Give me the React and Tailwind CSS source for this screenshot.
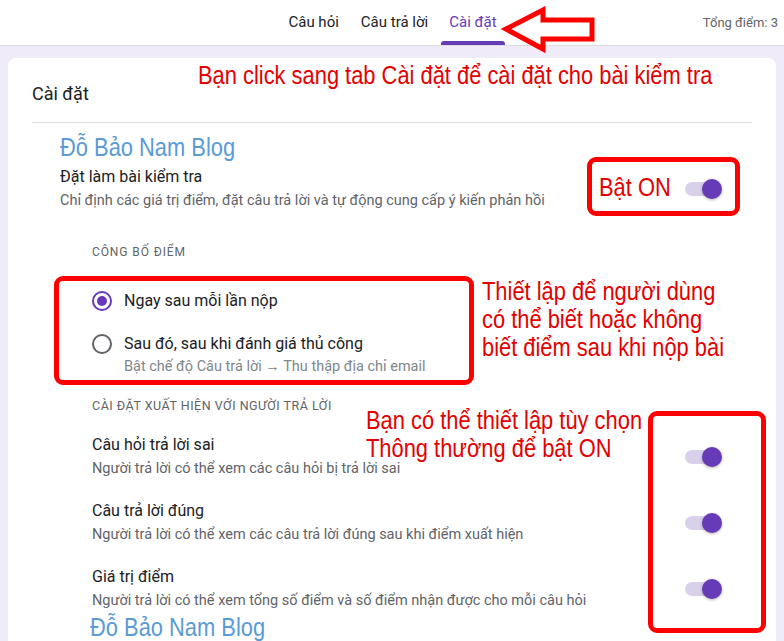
import React from "react";

const RED_TEXT = "text-[#e40000]";
const arial = { fontFamily: '"Liberation Sans", Arial, sans-serif' };

function Narrow({ className = "", children }) {
  return (
    <div
      className={"origin-top-left scale-x-[0.875] whitespace-nowrap " + className}
      style={arial}
    >
      {children}
    </div>
  );
}

function Toggle() {
  return (
    <div className="relative w-[37px] h-[20px] shrink-0">
      <div className="absolute left-0 top-[3px] w-[34px] h-[14px] rounded-full bg-[#d9d0ec]" />
      <div className="absolute right-0 top-0 w-[20px] h-[20px] rounded-full bg-[#673ab7] shadow-[0_1px_3px_rgba(0,0,0,0.3)]" />
    </div>
  );
}

function Radio({ checked }) {
  return (
    <div
      className={
        "w-[20px] h-[20px] rounded-full border-2 flex items-center justify-center shrink-0 " +
        (checked ? "border-[#673ab7]" : "border-[#5f6368]")
      }
    >
      {checked && <div className="w-[10px] h-[10px] rounded-full bg-[#673ab7]" />}
    </div>
  );
}

function SettingRow({ title, sub, className = "" }) {
  return (
    <div className={"flex items-center justify-between " + className}>
      <div>
        <div className="text-[16px] leading-[20px] text-[#202124]">{title}</div>
        <div className="text-[14.5px] leading-[20px] mt-[4px] text-[#5f6368]">{sub}</div>
      </div>
      <Toggle />
    </div>
  );
}

export default function App() {
  return (
    <div
      className="relative w-[784px] h-[641px] overflow-hidden bg-[#f0ebf8]"
      style={{ fontFamily: 'Roboto, "Liberation Sans", sans-serif' }}
    >
      {/* Header */}
      <div className="h-[46px] bg-white border-b border-[#dadce0] grid grid-cols-[1fr_auto_1fr]">
        <div />
        <div className="flex items-stretch gap-[4px]">
          <div className="px-[9px] flex items-center text-[15px] text-[#202124]">Câu hỏi</div>
          <div className="px-[9px] flex items-center text-[15px] text-[#202124]">Câu trả lời</div>
          <div className="relative px-[8px] flex items-center text-[15px] text-[#673ab7]">
            Cài đặt
            <div className="absolute left-0 right-0 bottom-0 h-[4px] rounded-t-[3px] bg-[#673ab7]" />
          </div>
        </div>
        <div className="flex items-center justify-end pr-[6px] text-[13px] text-[#5f6368]">Tổng điểm: 3</div>
      </div>

      {/* Card */}
      <div className="mx-2 mt-[12px] rounded-lg bg-white px-6 pt-[24px] pb-6">
        <div className="text-[18px] leading-[24px] text-[#202124]">Cài đặt</div>
        <div className="mt-[16px] h-px bg-[#dadce0]" />
        <div className="pl-[28px] pr-[30px]">
          <Narrow className="mt-[10px] text-[25px] leading-[28px] text-[#5b9bd5]">Đỗ Bảo Nam Blog</Narrow>
          <SettingRow
            className="mt-[6px]"
            title="Đặt làm bài kiểm tra"
            sub="Chỉ định các giá trị điểm, đặt câu trả lời và tự động cung cấp ý kiến phản hồi"
          />
          <div className="pl-[32px]">
            <div className="mt-[33px] text-[12px] leading-[16px] tracking-[0.9px] text-[#5f6368]">CÔNG BỐ ĐIỂM</div>
            <div className="mt-[31px] flex items-center gap-[12px]">
              <Radio checked />
              <div className="text-[16px] leading-[20px] text-[#202124]">Ngay sau mỗi lần nộp</div>
            </div>
            <div className="mt-[23px] flex items-start gap-[12px]">
              <Radio />
              <div>
                <div className="text-[16px] leading-[20px] text-[#202124]">Sau đó, sau khi đánh giá thủ công</div>
                <div className="text-[14.5px] leading-[20px] mt-[3px] text-[#80868b]">
                  Bật chế độ Câu trả lời → Thu thập địa chỉ email
                </div>
              </div>
            </div>
            <div className="mt-[21px] text-[12.5px] leading-[16px] tracking-[0.5px] text-[#5f6368]">
              CÀI ĐẶT XUẤT HIỆN VỚI NGƯỜI TRẢ LỜI
            </div>
            <SettingRow
              className="mt-[21px]"
              title="Câu hỏi trả lời sai"
              sub="Người trả lời có thể xem các câu hỏi bị trả lời sai"
            />
            <SettingRow
              className="mt-[22px]"
              title="Câu trả lời đúng"
              sub="Người trả lời có thể xem các câu trả lời đúng sau khi điểm xuất hiện"
            />
            <SettingRow
              className="mt-[22px]"
              title="Giá trị điểm"
              sub="Người trả lời có thể xem tổng số điểm và số điểm nhận được cho mỗi câu hỏi"
            />
            <Narrow className="mt-[2px] -ml-[2px] text-[25px] leading-[28px] text-[#5b9bd5]">Đỗ Bảo Nam Blog</Narrow>
          </div>
        </div>
      </div>

      {/* Annotations (overlay) */}
      <svg className="absolute left-[500px] top-[6px]" width="100" height="50" viewBox="0 0 100 50">
        <polygon
          points="6,23 43,4 43,14 92,14 92,33 43,33 43,43"
          fill="white"
          stroke="#ff0000"
          strokeWidth="5"
          strokeLinejoin="miter"
        />
      </svg>

      <Narrow className={"absolute left-[198px] top-[60px] text-[25px] leading-[30px] " + RED_TEXT}>
        Bạn click sang tab Cài đặt để cài đặt cho bài kiểm tra
      </Narrow>

      <div className="absolute left-[587px] top-[157px] w-[153px] h-[59px] border-[5px] border-[#ff0000] rounded-[9px]" />
      <Narrow className={"absolute left-[599px] top-[172px] text-[25px] leading-[30px] " + RED_TEXT}>Bật ON</Narrow>

      <div className="absolute left-[54px] top-[276px] w-[420px] h-[109px] border-[5px] border-[#ff0000] rounded-[9px]" />
      <Narrow className={"absolute left-[482px] top-[277px] text-[25px] leading-[28px] " + RED_TEXT}>
        <div>Thiết lập để người dùng</div>
        <div>có thể biết hoặc không</div>
        <div>biết điểm sau khi nộp bài</div>
      </Narrow>

      <Narrow className={"absolute left-[366px] top-[406px] text-[25px] leading-[28px] " + RED_TEXT}>
        <div>Bạn có thể thiết lập tùy chọn</div>
        <div>Thông thường để bật ON</div>
      </Narrow>
      <div className="absolute left-[648px] top-[411px] w-[118px] h-[222px] border-[5px] border-[#ff0000] rounded-[9px]" />
    </div>
  );
}
